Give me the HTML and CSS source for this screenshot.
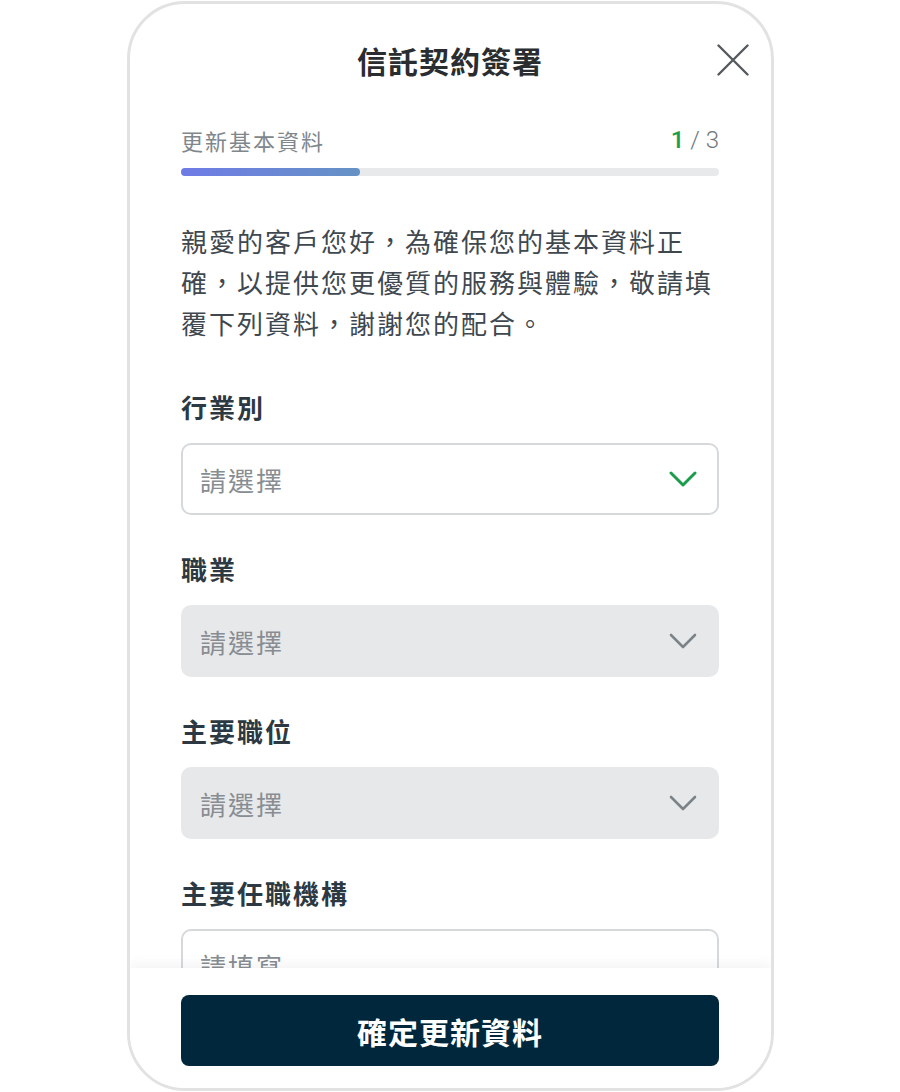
FILE: index.html
```html
<!DOCTYPE html>
<html>
<head>
    <meta charset="utf-8" />
    <title>信託契約簽署</title>
    <link rel="stylesheet" href="styles.css">
</head>
<body>
    <div class="phone">
        <header class="topBar">
            <span></span>
            <h1 class="title">信託契約簽署</h1>
            <button class="closeBtn" aria-label="關閉">
                <svg width="32" height="32" viewBox="0 0 32 32">
                    <path d="M1.5 1.5 L30.5 30.5 M30.5 1.5 L1.5 30.5" stroke="#555a5e" stroke-width="2.4" stroke-linecap="round" fill="none"/>
                </svg>
            </button>
        </header>

        <main class="scrollArea">
            <div class="content">
                <div class="stepRow">
                    <p class="stepName">更新基本資料</p>
                    <p class="stepCount"><span class="stepNow">1</span> / 3</p>
                </div>
                <div class="progress">
                    <div class="progressFill" style="width: 33.3%"></div>
                </div>

                <p class="intro">親愛的客戶您好，為確保您的基本資料正確，以提供您更優質的服務與體驗，敬請填覆下列資料，謝謝您的配合。</p>

                <div class="field">
                    <p class="fieldLabel">行業別</p>
                    <div class="selectBox">
                        <span class="placeholder">請選擇</span>
                        <svg class="chevron" width="28" height="16" viewBox="0 0 28 16">
                            <path d="M2 2 L14 14 L26 2" stroke="#1a9e4b" stroke-width="3" stroke-linecap="round" stroke-linejoin="round" fill="none"/>
                        </svg>
                    </div>
                </div>

                <div class="field">
                    <p class="fieldLabel">職業</p>
                    <div class="selectBox disabled">
                        <span class="placeholder">請選擇</span>
                        <svg class="chevron" width="28" height="16" viewBox="0 0 28 16">
                            <path d="M2 2 L14 14 L26 2" stroke="#7c8388" stroke-width="2.6" stroke-linecap="round" stroke-linejoin="round" fill="none"/>
                        </svg>
                    </div>
                </div>

                <div class="field">
                    <p class="fieldLabel">主要職位</p>
                    <div class="selectBox disabled">
                        <span class="placeholder">請選擇</span>
                        <svg class="chevron" width="28" height="16" viewBox="0 0 28 16">
                            <path d="M2 2 L14 14 L26 2" stroke="#7c8388" stroke-width="2.6" stroke-linecap="round" stroke-linejoin="round" fill="none"/>
                        </svg>
                    </div>
                </div>

                <div class="field">
                    <p class="fieldLabel">主要任職機構</p>
                    <div class="selectBox">
                        <span class="placeholder">請填寫</span>
                    </div>
                </div>
            </div>
        </main>

        <footer class="bottomBar">
            <button class="submitBtn">確定更新資料</button>
        </footer>
    </div>
</body>
</html>
```

FILE: styles.css
```css
body {
    font-family: "Noto Sans CJK TC", "Noto Sans", sans-serif;
    margin: 0;
    background-color: white;
}
p {
    margin: 0;
}
.phone {
    box-sizing: border-box;
    width: 647px;
    height: 1090px;
    margin: 1px auto 0;
    border: 3px solid #e2e2e2;
    border-radius: 58px;
    overflow: hidden;
    display: flex;
    flex-direction: column;
    background-color: white;
}
.topBar {
    display: grid;
    grid-template-columns: 1fr auto 1fr;
    align-items: center;
    padding: 36px 22px 0;
}
.title {
    margin: 0;
    font-size: 30px;
    line-height: 40px;
    font-weight: 700;
    letter-spacing: 1px;
    color: #2a2d30;
}
.closeBtn {
    justify-self: end;
    border: none;
    background: none;
    padding: 0;
    width: 32px;
    height: 32px;
    display: flex;
}
.scrollArea {
    flex: 1;
    overflow: hidden;
}
.content {
    width: 538px;
    margin: 0 auto;
}
.stepRow {
    display: flex;
    justify-content: space-between;
    align-items: center;
    margin-top: 46px;
    height: 28px;
}
.stepName {
    font-size: 22px;
    letter-spacing: 2px;
    color: #80878c;
}
.stepCount {
    font-family: Roboto, "Noto Sans", sans-serif;
    font-size: 24px;
    font-weight: 300;
    color: #6f777c;
}
.stepNow {
    color: #1a9e4b;
    font-weight: 500;
}
.progress {
    margin-top: 14px;
    height: 8px;
    border-radius: 4px;
    background-color: #e8e9eb;
}
.progressFill {
    height: 100%;
    border-radius: 4px;
    background: linear-gradient(90deg, #6f7be6, #6592c4);
}
.intro {
    margin-top: 44px;
    font-size: 26px;
    line-height: 41px;
    letter-spacing: 2px;
    color: #3f484f;
}
.field {
    margin-top: 37px;
}
.intro + .field {
    margin-top: 47px;
}
.fieldLabel {
    font-size: 26px;
    line-height: 34px;
    font-weight: 700;
    letter-spacing: 2px;
    color: #2c3942;
    margin-bottom: 19px;
}
.selectBox {
    box-sizing: border-box;
    height: 72px;
    border: 2px solid #d6d9dc;
    border-radius: 10px;
    background-color: white;
    display: flex;
    align-items: center;
    justify-content: space-between;
    padding: 0 20px 0 17px;
}
.selectBox.disabled {
    background-color: #e7e8ea;
    border-color: #e7e8ea;
}
.placeholder {
    font-size: 26px;
    letter-spacing: 2px;
    color: #878d92;
}
.chevron {
    display: block;
}
.bottomBar {
    position: relative;
    z-index: 1;
    background-color: white;
    box-shadow: 0 -4px 12px rgba(0, 0, 0, 0.05);
    padding: 27px 0 22px;
}
.submitBtn {
    display: block;
    width: 538px;
    height: 71px;
    margin: 0 auto;
    border: none;
    border-radius: 8px;
    background-color: #00273b;
    color: white;
    font-family: "Noto Sans CJK TC", "Noto Sans", sans-serif;
    font-size: 30px;
    font-weight: 700;
    letter-spacing: 1px;
}
```
